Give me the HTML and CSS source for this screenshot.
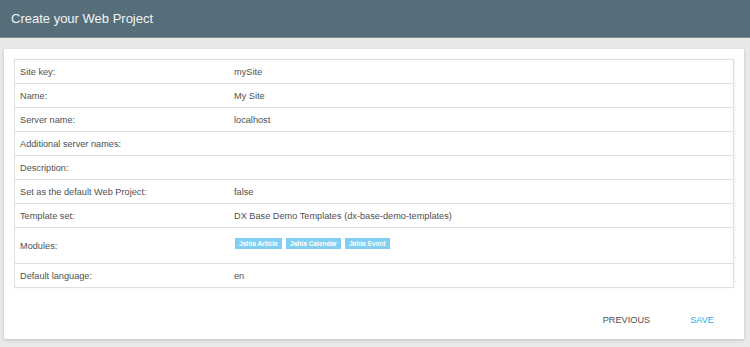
FILE: index.html
```html
<!DOCTYPE html>
<html>
<head>
<meta charset="utf-8">
<link rel="stylesheet" href="styles.css">
</head>
<body>
<header class="topbar">Create your Web Project</header>
<main class="card">
  <div class="summary">
    <div class="row"><div class="label">Site key:</div><div class="value">mySite</div></div>
    <div class="row"><div class="label">Name:</div><div class="value">My Site</div></div>
    <div class="row"><div class="label">Server name:</div><div class="value">localhost</div></div>
    <div class="row"><div class="label">Additional server names:</div><div class="value"></div></div>
    <div class="row"><div class="label">Description:</div><div class="value"></div></div>
    <div class="row"><div class="label">Set as the default Web Project:</div><div class="value">false</div></div>
    <div class="row"><div class="label">Template set:</div><div class="value">DX Base Demo Templates (dx-base-demo-templates)</div></div>
    <div class="row row-tall"><div class="label">Modules:</div><div class="value tags"><span class="tag">Jahia Article</span><span class="tag">Jahia Calendar</span><span class="tag">Jahia Event</span></div></div>
    <div class="row"><div class="label">Default language:</div><div class="value">en</div></div>
  </div>
  <div class="actions">
    <button class="btn">PREVIOUS</button>
    <button class="btn btn-primary">SAVE</button>
  </div>
</main>
</body>
</html>
```
FILE: styles.css
```css
html, body {
  margin: 0;
  padding: 0;
}
body {
  background: #e9e9e9;
  font-family: "Liberation Sans", Arial, sans-serif;
  width: 750px;
  height: 347px;
  overflow: hidden;
}
.topbar {
  height: 38px;
  box-sizing: border-box;
  background: #566e79;
  color: #f1f4f5;
  font-size: 13px;
  line-height: 37px;
  padding-left: 11px;
  border-bottom: 1px solid #7a8e97;
}
.card {
  margin: 11px 6px 0 4px;
  height: 290px;
  box-sizing: border-box;
  background: #fff;
  box-shadow: 0 1px 3px rgba(0,0,0,0.18);
  padding: 10px 10px 0 10px;
  display: flex;
  flex-direction: column;
}
.summary {
  border: 1px solid #e0e0e0;
  border-bottom: none;
  box-shadow: 1px 0 2px rgba(0,0,0,0.06);
}
.row {
  display: grid;
  grid-template-columns: 214px 1fr;
  height: 24px;
  box-sizing: border-box;
  border-bottom: 1px solid #e0e0e0;
  font-size: 9.2px;
  color: #505050;
  align-items: center;
}
.row-tall {
  height: 36px;
}
.label {
  padding-left: 5px;
}
.value {
  padding-left: 5px;
}
.tags {
  display: flex;
  gap: 4px;
  align-self: start;
  padding-top: 10px;
  padding-left: 6px;
}
.tag {
  background: #81d0f2;
  color: #fff;
  font-size: 6.6px;
  font-weight: bold;
  height: 11px;
  line-height: 11px;
  padding: 0 4px;
}
.actions {
  display: flex;
  justify-content: flex-end;
  margin-top: 25px;
  padding-right: 20px;
}
.btn {
  background: none;
  border: none;
  font-family: "Liberation Sans", Arial, sans-serif;
  font-size: 9.2px;
  color: #505050;
  padding: 0;
  height: 14px;
  line-height: 14px;
}
.btn-primary {
  color: #29b1ee;
  margin-left: 40px;
}
```
